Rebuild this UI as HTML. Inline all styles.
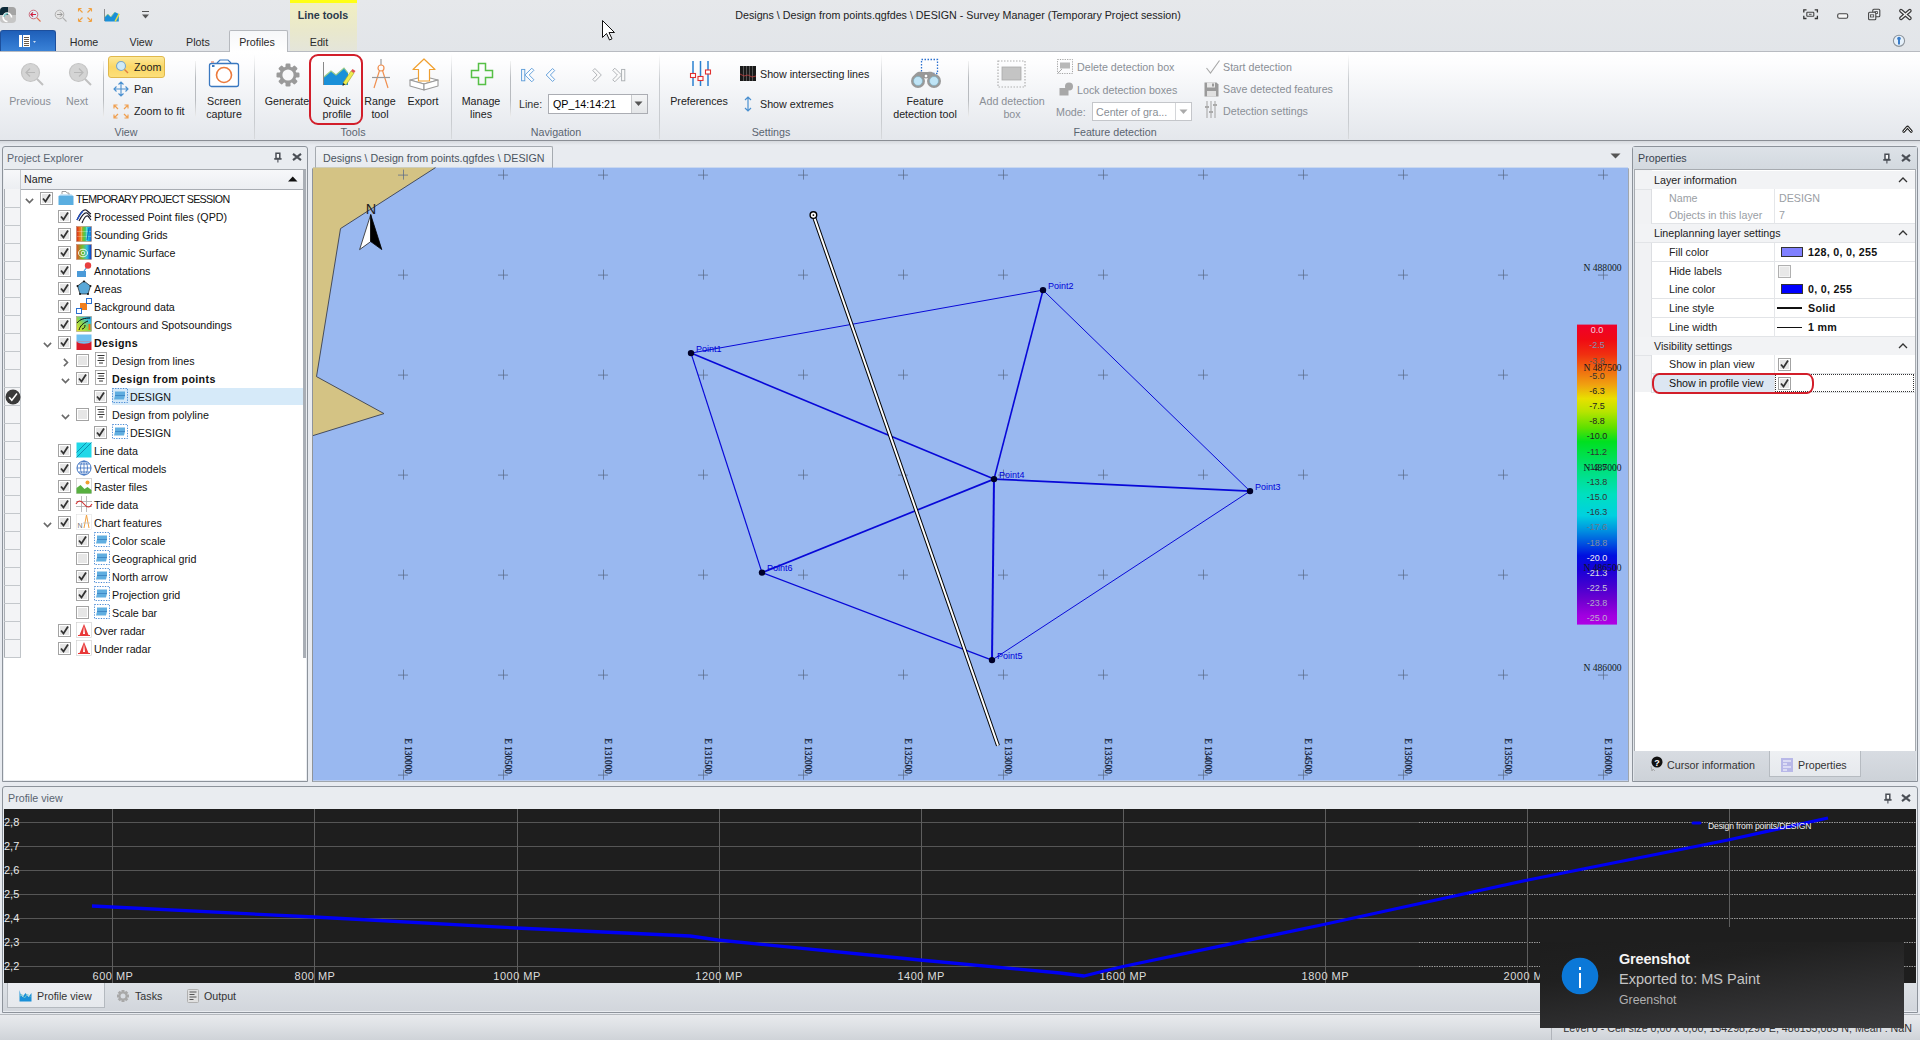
<!DOCTYPE html>
<html><head><meta charset="utf-8">
<style>
*{box-sizing:border-box;margin:0;padding:0}
html,body{width:1920px;height:1040px;overflow:hidden;background:#e8ebf0;font-family:"Liberation Sans",sans-serif;font-size:10.7px;color:#1e1e1e}
.a{position:absolute;white-space:nowrap}
.t{position:absolute;white-space:nowrap;line-height:12px}
.c{transform:translateX(-50%)}
svg{position:absolute;overflow:visible}
</style></head><body>
<!-- TITLE BAR -->
<div class="a" style="left:0;top:0;width:1920px;height:52px;background:linear-gradient(#e6e8eb,#e2e5e9)"></div>
<div id="ribbonbg" class="a" style="left:0;top:51px;width:1920px;height:90px;background:linear-gradient(#ffffff 0%,#fdfdfe 12%,#f0f2f5 55%,#e4e7ec 100%);border-top:1px solid #b8bbc1;border-bottom:1px solid #8a8e95"></div><div class="a" style="left:0;top:141px;width:1920px;height:4px;background:linear-gradient(#d6d9de,#e8ebf0)"></div>
<!-- line tools context -->
<div class="a" style="left:290px;top:0;width:67px;height:51px;background:linear-gradient(#f2f0c0,#e9e8cc 60%,#e4e5da)"></div>
<div class="a" style="left:290px;top:0;width:67px;height:3px;background:#ffff14"></div>
<div class="t c" style="left:323px;top:9px;font-weight:bold;color:#2a3a4a">Line tools</div>
<div class="t c" style="left:958px;top:9px;color:#222">Designs \ Design from points.qgfdes \ DESIGN - Survey Manager (Temporary Project session)</div>
<!-- tabs -->
<div class="a" style="left:0;top:30px;width:56px;height:21px;background:linear-gradient(#1f5fb8,#2e74cc 60%,#3a82d6);border-radius:3px 3px 0 0;border:1px solid #1d4f9c;border-bottom:none"></div>
<svg style="left:18px;top:34px" width="20" height="14"><rect x="1" y="1" width="3" height="12" fill="#fff"/><rect x="5" y="1" width="7" height="12" fill="#fff"/><g stroke="#6a5a4a" stroke-width="1"><line x1="6" y1="3.5" x2="11" y2="3.5"/><line x1="6" y1="5.5" x2="11" y2="5.5"/><line x1="6" y1="7.5" x2="11" y2="7.5"/><line x1="6" y1="9.5" x2="11" y2="9.5"/><line x1="6" y1="11.5" x2="11" y2="11.5"/></g><path d="M15 7l3 0l-1.5 2z" fill="#cde"/></svg>
<div class="a" style="left:229px;top:30px;width:59px;height:22px;background:linear-gradient(#f6f7f9,#ffffff);border:1px solid #b6b9be;border-bottom:none;border-radius:2px 2px 0 0"></div>
<div class="t c" style="left:84px;top:36px;color:#2b2b2b">Home</div>
<div class="t c" style="left:141px;top:36px;color:#2b2b2b">View</div>
<div class="t c" style="left:198px;top:36px;color:#2b2b2b">Plots</div>
<div class="t c" style="left:257px;top:36px;color:#2b2b2b">Profiles</div>
<div class="t c" style="left:319px;top:36px;color:#2b2b2b">Edit</div>
<!-- RIBBON CONTENT -->
<svg id="cursor" style="left:602px;top:20px;z-index:50" width="13" height="21"><path d="M0.5 0.5v17l4-4 3 6.5 2.5-1.2-3-6.3h5.5z" fill="#fff" stroke="#111" stroke-width="1" stroke-linejoin="round"/></svg>
<!-- quick access -->
<svg style="left:0;top:7px" width="16" height="16"><defs><clipPath id="lg"><rect x="0" y="0" width="16" height="16" rx="4"/></clipPath></defs><g clip-path="url(#lg)"><rect x="0" y="0" width="16" height="16" fill="#c6c6c6"/><rect x="0" y="0" width="8" height="8" fill="#0d2a38"/><rect x="8" y="0" width="8" height="8" fill="#a4a4a4"/></g><path d="M11.5 10.5A4.2 4.2 0 1 0 7.5 14.5" fill="none" stroke="#fff" stroke-width="1.6"/><path d="M4 10A4.2 4.2 0 0 1 8 6.5" fill="none" stroke="#7cc8c8" stroke-width="1.4"/></svg>
<svg style="left:28px;top:9px" width="14" height="13"><circle cx="5.5" cy="5.5" r="4.3" fill="#dff0f8" stroke="#c86070" stroke-width="0.9"/><path d="M8 5.5H3M5 3.3L2.8 5.5 5 7.7" fill="none" stroke="#d02040" stroke-width="1.1"/><line x1="8.7" y1="8.7" x2="12.5" y2="12.5" stroke="#e07050" stroke-width="1.1"/></svg>
<svg style="left:54px;top:9px" width="14" height="13"><circle cx="5.5" cy="5.5" r="4.3" fill="#e4e4e4" stroke="#aaa" stroke-width="0.9"/><path d="M3 5.5h5M6 3.3l2.2 2.2L6 7.7" fill="none" stroke="#999" stroke-width="1"/><line x1="8.7" y1="8.7" x2="12.5" y2="12.5" stroke="#b0b0b0" stroke-width="1.1"/></svg>
<svg style="left:77px;top:7px" width="16" height="16" fill="none" stroke="#f0a040" stroke-width="1.1"><path d="M1.5 1.5l4 4M1.5 1.5h3M1.5 1.5v3M14.5 1.5l-4 4M14.5 1.5h-3M14.5 1.5v3M1.5 14.5l4-4M1.5 14.5h3M1.5 14.5v-3M14.5 14.5l-4-4M14.5 14.5h-3M14.5 14.5v-3"/></svg>
<svg style="left:104px;top:9px" width="16" height="13"><line x1="0.5" y1="0" x2="0.5" y2="12" stroke="#777" stroke-width="0.8"/><path d="M0.8 8l3-3 3 3 4-5 4 2v7.5H0.8z" fill="#1a90d8"/><path d="M0.8 8l3-3 3 3 4-5" fill="none" stroke="#9c8" stroke-width="0.8"/><path d="M10.5 12l4-7.5 1.3 0.8-4 7.5z" fill="#e8e040"/></svg>
<svg style="left:141px;top:10px" width="9" height="10"><line x1="1" y1="1.5" x2="8" y2="1.5" stroke="#555"/><path d="M1 4.5h7l-3.5 4z" fill="#555"/></svg>
<!-- window controls -->
<svg style="left:1803px;top:9px" width="16" height="12"><path d="M0.8 3.5V0.8h2.7M11.7 0.8h2.7v2.7M14.4 6.8v2.7h-2.7M3.5 9.5H0.8V6.8" fill="none" stroke="#333" stroke-width="1.3"/><rect x="3.8" y="3.3" width="7" height="4" rx="0.6" fill="none" stroke="#444" stroke-width="1.1"/><line x1="6" y1="5.3" x2="8.6" y2="5.3" stroke="#444" stroke-width="0.9"/></svg>
<svg style="left:1837px;top:13px" width="12" height="7"><rect x="0.7" y="0.7" width="10" height="4.5" rx="1.5" fill="#f6f6f6" stroke="#444" stroke-width="1.1"/></svg>
<svg style="left:1868px;top:8px" width="13" height="13"><rect x="4.8" y="1.3" width="7" height="7.5" rx="1" fill="#eceef1" stroke="#444" stroke-width="1.1"/><rect x="6.8" y="3.6" width="2.6" height="2" fill="none" stroke="#444" stroke-width="0.8"/><rect x="0.6" y="4.2" width="7.2" height="7.6" rx="1" fill="#eceef1" stroke="#444" stroke-width="1.1"/><rect x="2.5" y="6.8" width="3.2" height="2.2" fill="none" stroke="#444" stroke-width="0.8"/></svg>
<svg style="left:1899px;top:9px" width="13" height="11"><path d="M2 1.8l8.8 7.4M10.8 1.8l-8.8 7.4" stroke="#3a3a3a" stroke-width="3.8" stroke-linecap="round"/><path d="M2 1.8l8.8 7.4M10.8 1.8l-8.8 7.4" stroke="#f4f4f4" stroke-width="1.4" stroke-linecap="round"/></svg>
<svg style="left:1892px;top:34px" width="14" height="14"><circle cx="7" cy="6.8" r="5.6" fill="#e6f1fb" stroke="#8e959c" stroke-width="1.1"/><circle cx="7" cy="4.6" r="1.8" fill="#3a7cc8"/><rect x="6" y="5" width="2" height="5.5" rx="0.5" fill="#3a7cc8"/></svg>
<svg style="left:1902px;top:124px" width="11" height="10"><path d="M1.8 7.3L5.5 3l3.7 4.3" fill="none" stroke="#2a2a2a" stroke-width="3" stroke-linecap="round" stroke-linejoin="round"/><path d="M1.8 7.3L5.5 3l3.7 4.3" fill="none" stroke="#fff" stroke-width="1" stroke-linecap="round" stroke-linejoin="round"/></svg>
<!-- group separators -->
<div class="a" style="left:254px;top:54px;width:1px;height:85px;background:linear-gradient(#fff,#c9ccd0 30%,#c9ccd0 80%,#d8dadd)"></div>
<div class="a" style="left:451px;top:54px;width:1px;height:85px;background:linear-gradient(#fff,#c9ccd0 30%,#c9ccd0 80%,#d8dadd)"></div>
<div class="a" style="left:659px;top:54px;width:1px;height:85px;background:linear-gradient(#fff,#c9ccd0 30%,#c9ccd0 80%,#d8dadd)"></div>
<div class="a" style="left:881px;top:54px;width:1px;height:85px;background:linear-gradient(#fff,#c9ccd0 30%,#c9ccd0 80%,#d8dadd)"></div>
<div class="a" style="left:1348px;top:54px;width:1px;height:85px;background:linear-gradient(#fff,#c9ccd0 30%,#c9ccd0 80%,#d8dadd)"></div>
<!-- inner separators -->
<div class="a" style="left:103px;top:61px;width:1px;height:56px;background:linear-gradient(#f4f4f4,#b8bbbf 30%,#b8bbbf 70%,#eee)"></div>
<div class="a" style="left:195px;top:61px;width:1px;height:56px;background:linear-gradient(#f4f4f4,#b8bbbf 30%,#b8bbbf 70%,#eee)"></div>
<div class="a" style="left:510px;top:61px;width:1px;height:56px;background:linear-gradient(#f4f4f4,#b8bbbf 30%,#b8bbbf 70%,#eee)"></div>
<div class="a" style="left:968px;top:61px;width:1px;height:56px;background:linear-gradient(#f4f4f4,#b8bbbf 30%,#b8bbbf 70%,#eee)"></div>
<!-- group labels -->
<div class="t c" style="left:126px;top:126px;color:#5a6470">View</div>
<div class="t c" style="left:353px;top:126px;color:#5a6470">Tools</div>
<div class="t c" style="left:556px;top:126px;color:#5a6470">Navigation</div>
<div class="t c" style="left:771px;top:126px;color:#5a6470">Settings</div>
<div class="t c" style="left:1115px;top:126px;color:#5a6470">Feature detection</div>

<!-- VIEW group -->
<svg style="left:20px;top:62px" width="24" height="24"><circle cx="10.5" cy="10.5" r="9" fill="#d4d4d4" stroke="#c4c4c4" stroke-width="1.2"/><path d="M15 10.5H6M10 6.5l-4 4 4 4" fill="none" stroke="#b8b8b8" stroke-width="1.2"/><line x1="17" y1="17" x2="23" y2="23" stroke="#c0c0c0" stroke-width="2"/></svg>
<div class="t c" style="left:30px;top:95px;color:#8a8f96">Previous</div>
<svg style="left:68px;top:62px" width="24" height="24"><circle cx="10.5" cy="10.5" r="9" fill="#d4d4d4" stroke="#c4c4c4" stroke-width="1.2"/><path d="M6 10.5h9M11 6.5l4 4-4 4" fill="none" stroke="#b8b8b8" stroke-width="1.2"/><line x1="17" y1="17" x2="23" y2="23" stroke="#c0c0c0" stroke-width="2"/></svg>
<div class="t c" style="left:77px;top:95px;color:#8a8f96">Next</div>
<div class="a" style="left:108px;top:56px;width:57px;height:22px;border:1px solid #e0b84c;border-radius:3px;background:linear-gradient(#fde99a,#fbd766 50%,#fcdf7a)"></div>
<svg style="left:115px;top:60px" width="14" height="14"><circle cx="6" cy="6" r="4.5" fill="#cfeaf8" stroke="#7aa8c8" stroke-width="1.1"/><line x1="9.5" y1="9.5" x2="13" y2="13" stroke="#e08040" stroke-width="1.4"/></svg>
<div class="t" style="left:134px;top:61px;color:#222">Zoom</div>
<svg style="left:113px;top:81px" width="16" height="16" fill="none" stroke="#4a90d0" stroke-width="1.1"><path d="M8 1v14M1 8h14M5.5 3.5L8 1l2.5 2.5M5.5 12.5L8 15l2.5-2.5M3.5 5.5L1 8l2.5 2.5M12.5 5.5L15 8l-2.5 2.5"/></svg>
<div class="t" style="left:134px;top:83px;color:#222">Pan</div>
<svg style="left:113px;top:104px" width="16" height="15" fill="none" stroke="#f0a050" stroke-width="1.2"><path d="M1 4.5V1h3.5M1 1l4 4M15 4.5V1h-3.5M15 1l-4 4M1 10.5V14h3.5M1 14l4-4M15 10.5V14h-3.5M15 14l-4-4"/></svg>
<div class="t" style="left:134px;top:105px;color:#222">Zoom to fit</div>
<svg style="left:208px;top:59px" width="32" height="29"><path d="M9 4l3-3h8l3 3" fill="none" stroke="#3a78c0" stroke-width="1.2"/><rect x="1.5" y="4.5" width="29" height="23" rx="2" fill="#fff" stroke="#3a78c0" stroke-width="1.3"/><circle cx="16" cy="16" r="7.5" fill="none" stroke="#ec7a3c" stroke-width="1.6"/><rect x="4" y="6" width="2.5" height="2" fill="#3a78c0"/><path d="M3 3h3" stroke="#e07050" stroke-width="1"/></svg>
<div class="t c" style="left:224px;top:95px;color:#222">Screen</div>
<div class="t c" style="left:224px;top:108px;color:#222">capture</div>

<!-- TOOLS group -->
<svg style="left:276px;top:63px" width="24" height="24"><g fill="#9a9a9a"><rect x="9.5" y="0.5" width="5" height="23" rx="1.2"/><rect x="9.5" y="0.5" width="5" height="23" rx="1.2" transform="rotate(45 12 12)"/><rect x="9.5" y="0.5" width="5" height="23" rx="1.2" transform="rotate(90 12 12)"/><rect x="9.5" y="0.5" width="5" height="23" rx="1.2" transform="rotate(135 12 12)"/><circle cx="12" cy="12" r="8.5"/></g><circle cx="12" cy="12" r="5.6" fill="#f8f8f9"/></svg>
<div class="t c" style="left:287px;top:95px;color:#222">Generate</div>
<svg style="left:323px;top:62px" width="32" height="24"><line x1="0.5" y1="0" x2="0.5" y2="23" stroke="#888" stroke-width="1"/><path d="M1 15l7-6 5 4 8-7 4 5v12H1z" fill="#1a90d8"/><path d="M1 15l7-6 5 4 8-7 4 5" fill="none" stroke="#98cc88" stroke-width="1.1"/><path d="M20 21l8-12 3 2-8 12z" fill="#f0ec50" stroke="#a0a020" stroke-width="0.6"/><path d="M28 9l1.5-2 3 2-1.5 2z" fill="#e05050"/><path d="M20 21l-0.5 3 2.5-1.5z" fill="#222"/></svg>
<div class="a" style="left:309px;top:54px;width:54px;height:71px;border:2.5px solid #d21e2a;border-radius:9px"></div>
<div class="t c" style="left:337px;top:95px;color:#222">Quick</div>
<div class="t c" style="left:337px;top:108px;color:#222">profile</div>
<svg style="left:372px;top:59px" width="18" height="30" fill="none" stroke="#f09050" stroke-width="1.2"><line x1="9" y1="0" x2="9" y2="6" stroke="#999"/><circle cx="9" cy="9" r="3"/><path d="M7.5 11.5L2 29M10.5 11.5L16 29"/><line x1="0" y1="18.5" x2="18" y2="18.5" stroke="#999"/></svg>
<div class="t c" style="left:380px;top:95px;color:#222">Range</div>
<div class="t c" style="left:380px;top:108px;color:#222">tool</div>
<svg style="left:408px;top:57px" width="32" height="34"><path d="M2 23L16 19.5 30 23 16 27Z" fill="#fff" stroke="#9a9a9a" stroke-width="1.1" stroke-linejoin="round"/><path d="M2 23L16 27V33L2 29Z" fill="#fff" stroke="#9a9a9a" stroke-width="1.1" stroke-linejoin="round"/><path d="M16 27L30 23V29L16 33Z" fill="#fff" stroke="#9a9a9a" stroke-width="1.1" stroke-linejoin="round"/><path d="M16 2L27 12.5H21.5V24H10.5V12.5H5Z" fill="#fff" stroke="#f0a030" stroke-width="1.2" stroke-linejoin="round"/></svg>
<div class="t c" style="left:423px;top:95px;color:#222">Export</div>

<!-- NAVIGATION -->
<svg style="left:470px;top:62px" width="24" height="24"><path d="M8.5 1.5h7v7h7v7h-7v7h-7v-7h-7v-7h7z" fill="none" stroke="#56c046" stroke-width="1.5"/></svg>
<div class="t c" style="left:481px;top:95px;color:#222">Manage</div>
<div class="t c" style="left:481px;top:108px;color:#222">lines</div>
<svg style="left:520px;top:67px" width="16" height="16"><rect x="1.6" y="2.4" width="3.2" height="11.4" fill="#f4f8fc" stroke="#5a9ad8" stroke-width="0.9"/><path d="M4.9 8L11.8 1.2 13.9 3.3 9.2 8 13.9 12.7 11.8 14.8Z" fill="#fafcfe" stroke="#5a9ad8" stroke-width="0.9" stroke-linejoin="round"/></svg>
<svg style="left:545px;top:67px" width="12" height="16"><path d="M1.2 8L7.6 1.5 9.7 3.6 5.4 8 9.7 12.4 7.6 14.5Z" fill="#fafcfe" stroke="#5a9ad8" stroke-width="0.9" stroke-linejoin="round"/></svg>
<svg style="left:591px;top:67px" width="12" height="16"><path d="M10.3 8L3.9 1.5 1.8 3.6 6.1 8 1.8 12.4 3.9 14.5Z" fill="#fafafa" stroke="#a8acb0" stroke-width="0.9" stroke-linejoin="round"/></svg>
<svg style="left:611px;top:67px" width="16" height="16"><path d="M10.6 8L3.8 1.2 1.7 3.3 6.4 8 1.7 12.7 3.8 14.8Z" fill="#fafafa" stroke="#a8acb0" stroke-width="0.9" stroke-linejoin="round"/><rect x="10.6" y="2.4" width="3.2" height="11.4" fill="#fafafa" stroke="#a8acb0" stroke-width="0.9"/></svg>
<div class="t" style="left:519px;top:98px;color:#333">Line:</div>
<div class="a" style="left:548px;top:94px;width:100px;height:20px;background:#fff;border:1px solid #abadb3"></div>
<div class="a" style="left:631px;top:95px;width:16px;height:18px;background:linear-gradient(#f4f5f6,#e4e6e8);border-left:1px solid #c8cacd"></div>
<svg style="left:634px;top:101px" width="9" height="6"><path d="M0.5 0.5h8l-4 4.5z" fill="#555"/></svg>
<div class="t" style="left:553px;top:98px;color:#000">QP_14:14:21</div>

<!-- SETTINGS -->
<svg style="left:690px;top:60px" width="21" height="27"><g stroke="#2a80d0" stroke-width="1.5"><line x1="3" y1="1" x2="3" y2="26"/><line x1="10.5" y1="1" x2="10.5" y2="26"/><line x1="18" y1="1" x2="18" y2="26"/></g><g fill="#fff" stroke="#e03030" stroke-width="1.1"><rect x="0.5" y="13.5" width="5" height="4"/><rect x="8" y="16.5" width="5" height="4"/><rect x="15.5" y="10" width="5" height="4"/></g></svg>
<div class="t c" style="left:699px;top:95px;color:#222">Preferences</div>
<svg style="left:740px;top:66px" width="16" height="15"><rect x="0" y="0" width="16" height="15" fill="#1a1a1a"/><g stroke="#555" stroke-width="1"><line x1="3.5" y1="0" x2="3.5" y2="15"/><line x1="6.5" y1="0" x2="6.5" y2="15"/><line x1="9.5" y1="0" x2="9.5" y2="15"/><line x1="12.5" y1="0" x2="12.5" y2="15"/></g><path d="M0 8l4 2 4-1 4 2 4-1" fill="none" stroke="#c04040" stroke-width="0.8"/></svg>
<div class="t" style="left:760px;top:68px;color:#222">Show intersecting lines</div>
<svg style="left:743px;top:96px" width="10" height="16" fill="none" stroke="#4a90d0" stroke-width="1.2"><path d="M5 1v14M2 4l3-3 3 3M2 12l3 3 3-3"/></svg>
<div class="t" style="left:760px;top:98px;color:#222">Show extremes</div>

<!-- FEATURE DETECTION -->
<svg style="left:909px;top:58px" width="34" height="31"><rect x="12.5" y="1.5" width="16" height="14" fill="none" stroke="#2a70d0" stroke-width="1.3" stroke-dasharray="1.5 1.5"/><path d="M4 20c2-6 6-7 9-6h6c3-1 7 0 9 6" fill="#999"/><circle cx="9" cy="23" r="7" fill="#999"/><circle cx="25" cy="23" r="7" fill="#999"/><circle cx="9" cy="23" r="4.5" fill="#bfe4f6" stroke="#7ab" stroke-width="0.6"/><circle cx="25" cy="23" r="4.5" fill="#bfe4f6" stroke="#7ab" stroke-width="0.6"/><circle cx="17" cy="18" r="2" fill="#fff" stroke="#888"/></svg>
<div class="t c" style="left:925px;top:95px;color:#222">Feature</div>
<div class="t c" style="left:925px;top:108px;color:#222">detection tool</div>
<svg style="left:997px;top:60px" width="29" height="28"><rect x="1" y="1" width="27" height="26" fill="none" stroke="#b0b0b0" stroke-width="1.2" stroke-dasharray="1.5 1.5"/><rect x="5" y="7" width="19" height="13" fill="#c4c4c4" stroke="#aaa" stroke-width="0.8"/></svg>
<div class="t c" style="left:1012px;top:95px;color:#8a8f96">Add detection</div>
<div class="t c" style="left:1012px;top:108px;color:#8a8f96">box</div>
<svg style="left:1057px;top:59px" width="16" height="15"><rect x="0.5" y="0.5" width="15" height="14" fill="none" stroke="#999" stroke-width="0.9" stroke-dasharray="1.2 1.2"/><rect x="3" y="3.5" width="10" height="6" fill="#b8b8b8"/><path d="M1 14l4-4" stroke="#aaa"/></svg>
<div class="t" style="left:1077px;top:61px;color:#8a8f96">Delete detection box</div>
<svg style="left:1059px;top:82px" width="15" height="14"><rect x="0.5" y="6" width="9" height="7.5" fill="#a8a8a8"/><circle cx="10" cy="4.5" r="4" fill="#a8a8a8"/></svg>
<div class="t" style="left:1077px;top:84px;color:#8a8f96">Lock detection boxes</div>
<div class="t" style="left:1056px;top:106px;color:#8a8f96">Mode:</div>
<div class="a" style="left:1092px;top:102px;width:100px;height:19px;background:#fff;border:1px solid #c4c6ca"></div>
<div class="a" style="left:1175px;top:103px;width:16px;height:17px;border-left:1px solid #d4d6d9"></div>
<svg style="left:1179px;top:109px" width="9" height="6"><path d="M0.5 0.5h8l-4 4.5z" fill="#aaa"/></svg>
<div class="t" style="left:1096px;top:106px;color:#8a8f96">Center of gra...</div>
<svg style="left:1205px;top:59px" width="16" height="16"><path d="M1.5 9l4 5L14.5 1.5" fill="none" stroke="#a8a8a8" stroke-width="1.1"/></svg>
<div class="t" style="left:1223px;top:61px;color:#8a8f96">Start detection</div>
<svg style="left:1204px;top:82px" width="15" height="15"><path d="M0.5 0.5h12l2 2v12h-14z" fill="#9a9a9a"/><rect x="3" y="0.5" width="8" height="5" fill="#e8e8e8"/><rect x="3" y="9" width="9" height="5.5" fill="#e0e0e0"/><rect x="8" y="1.5" width="2" height="3" fill="#9a9a9a"/></svg>
<div class="t" style="left:1223px;top:83px;color:#8a8f96">Save detected features</div>
<svg style="left:1205px;top:101px" width="12" height="17" fill="none" stroke="#aaa" stroke-width="1.1"><path d="M2 0v17M6 0v17M10 0v17"/><path d="M0 6h4M4 11h4M8 4h4" stroke-width="2"/></svg>
<div class="t" style="left:1223px;top:105px;color:#8a8f96">Detection settings</div>

<!-- PANELS -->
<div class="a" style="left:2px;top:146px;width:306px;height:636px;border:1px solid #8d939b;border-radius:3px 3px 0 0;background:#e9ecf0"></div>
<div class="t" style="left:7px;top:152px;color:#5a6470">Project Explorer</div>
<svg style="left:273.6px;top:152px" width="8" height="11"><path d="M2 1.3h3.8v5.3H2z" fill="#fafbfc" stroke="#4a4e55" stroke-width="1.5"/><path d="M0.2 6.9h7.4" stroke="#4a4e55" stroke-width="1.6"/><path d="M3.9 7v3.6" stroke="#4a4e55" stroke-width="1.1"/></svg>
<svg style="left:291.5px;top:153.4px" width="10" height="8"><path d="M1 0.9l8 6.2M9 0.9l-8 6.2" stroke="#4a4e55" stroke-width="2.1"/></svg>
<div class="a" style="left:4px;top:169px;width:302px;height:611px;background:#fff;border-top:1px solid #a7abb0"></div>
<div class="a" style="left:4px;top:170px;width:299px;height:20px;background:linear-gradient(#f7f8fa,#eceef2);border-bottom:1px solid #a9adb3"></div>
<div class="a" style="left:303px;top:170px;width:3px;height:488px;background:#a9aeb5"></div>
<div class="a" style="left:20px;top:170px;width:1px;height:19px;background:#c4c8cc"></div>
<div class="t" style="left:24px;top:173px;color:#222">Name</div>
<svg style="left:288px;top:176px" width="10" height="6"><path d="M0 5.5h9.5L4.75 0.5z" fill="#111"/></svg>
<div class="a" style="left:4px;top:189px;width:17px;height:469px;background:#f3f4f6;border-right:1px solid #c0c4c8;border-left:1px solid #a9adb3"></div>
<div class="a" style="left:4px;top:207px;width:17px;height:1px;background:#c4c8cc"></div>
<div class="a" style="left:4px;top:225px;width:17px;height:1px;background:#c4c8cc"></div>
<div class="a" style="left:4px;top:243px;width:17px;height:1px;background:#c4c8cc"></div>
<div class="a" style="left:4px;top:261px;width:17px;height:1px;background:#c4c8cc"></div>
<div class="a" style="left:4px;top:279px;width:17px;height:1px;background:#c4c8cc"></div>
<div class="a" style="left:4px;top:297px;width:17px;height:1px;background:#c4c8cc"></div>
<div class="a" style="left:4px;top:315px;width:17px;height:1px;background:#c4c8cc"></div>
<div class="a" style="left:4px;top:333px;width:17px;height:1px;background:#c4c8cc"></div>
<div class="a" style="left:4px;top:351px;width:17px;height:1px;background:#c4c8cc"></div>
<div class="a" style="left:4px;top:369px;width:17px;height:1px;background:#c4c8cc"></div>
<div class="a" style="left:4px;top:387px;width:17px;height:1px;background:#c4c8cc"></div>
<div class="a" style="left:4px;top:405px;width:17px;height:1px;background:#c4c8cc"></div>
<div class="a" style="left:4px;top:423px;width:17px;height:1px;background:#c4c8cc"></div>
<div class="a" style="left:4px;top:441px;width:17px;height:1px;background:#c4c8cc"></div>
<div class="a" style="left:4px;top:459px;width:17px;height:1px;background:#c4c8cc"></div>
<div class="a" style="left:4px;top:477px;width:17px;height:1px;background:#c4c8cc"></div>
<div class="a" style="left:4px;top:495px;width:17px;height:1px;background:#c4c8cc"></div>
<div class="a" style="left:4px;top:513px;width:17px;height:1px;background:#c4c8cc"></div>
<div class="a" style="left:4px;top:531px;width:17px;height:1px;background:#c4c8cc"></div>
<div class="a" style="left:4px;top:549px;width:17px;height:1px;background:#c4c8cc"></div>
<div class="a" style="left:4px;top:567px;width:17px;height:1px;background:#c4c8cc"></div>
<div class="a" style="left:4px;top:585px;width:17px;height:1px;background:#c4c8cc"></div>
<div class="a" style="left:4px;top:603px;width:17px;height:1px;background:#c4c8cc"></div>
<div class="a" style="left:4px;top:621px;width:17px;height:1px;background:#c4c8cc"></div>
<div class="a" style="left:4px;top:639px;width:17px;height:1px;background:#c4c8cc"></div>
<div class="a" style="left:4px;top:657px;width:17px;height:1px;background:#c4c8cc"></div>
<div class="a" style="left:112px;top:388px;width:191px;height:17px;background:#d6eaf9"></div>
<svg style="left:5px;top:389px" width="16" height="16"><circle cx="8" cy="8" r="7.5" fill="#3a3a3a"/><path d="M4.2 8.2l2.6 3L12 4.5" fill="none" stroke="#fff" stroke-width="1.5"/></svg>
<svg style="left:25px;top:198px" width="9" height="6"><path d="M0.9 0.9l3.6 3.6 3.6-3.6" fill="none" stroke="#6a6a6a" stroke-width="1.6"/></svg>
<svg style="left:40px;top:192px" width="13" height="13"><rect x="0.5" y="0.5" width="12" height="12" fill="#fff" stroke="#a3a3a3"/><rect x="2" y="2" width="9" height="9" fill="#e6e6e6"/><path d="M3 6.5l2.5 3L10 2.5" fill="none" stroke="#333" stroke-width="1.8"/></svg>
<svg style="left:58px;top:190px" width="16" height="16"><path d="M4 4V1.5h4l1 1.5h2v2" fill="#fff" stroke="#888" stroke-width="0.8"/><rect x="0.5" y="6" width="15" height="9" fill="#5aaee0"/><path d="M0.5 6l2-1.5h11l2 1.5" fill="#9fd0f0"/></svg>
<div class="t" style="left:76px;top:193px;color:#111;letter-spacing:-0.68px">TEMPORARY PROJECT SESSION</div>
<svg style="left:58px;top:210px" width="13" height="13"><rect x="0.5" y="0.5" width="12" height="12" fill="#fff" stroke="#a3a3a3"/><rect x="2" y="2" width="9" height="9" fill="#e6e6e6"/><path d="M3 6.5l2.5 3L10 2.5" fill="none" stroke="#333" stroke-width="1.8"/></svg>
<svg style="left:76px;top:208px" width="16" height="16"><path d="M1 12C4 5 7 1 10 2c2 1 3 3 5 4M3 13C6 7 9 4 11 5c2 1 3 3 4 4M6 15C8 10 10 7 12 8c1 1 2 3 3 4" fill="none" stroke="#1a1a2a" stroke-width="1.2"/><path d="M1 12C3 8 5 5 7 3" fill="none" stroke="#2050c8" stroke-width="1.4"/></svg>
<div class="t" style="left:94px;top:211px;color:#111;">Processed Point files (QPD)</div>
<svg style="left:58px;top:228px" width="13" height="13"><rect x="0.5" y="0.5" width="12" height="12" fill="#fff" stroke="#a3a3a3"/><rect x="2" y="2" width="9" height="9" fill="#e6e6e6"/><path d="M3 6.5l2.5 3L10 2.5" fill="none" stroke="#333" stroke-width="1.8"/></svg>
<svg style="left:76px;top:226px" width="16" height="16"><defs><linearGradient id="gsg" x1="0" x2="1"><stop offset="0" stop-color="#d82818"/><stop offset="0.3" stop-color="#f09020"/><stop offset="0.5" stop-color="#58c838"/><stop offset="0.75" stop-color="#20c8e8"/><stop offset="1" stop-color="#1060d0"/></linearGradient></defs><rect x="0.5" y="0.5" width="15" height="15" fill="url(#gsg)" stroke="#b08060" stroke-width="0.5"/><path d="M5.5 1v14M10.5 1v14M1 5.5h14M1 10.5h14" stroke="#fff" stroke-opacity="0.35" stroke-width="0.8"/><path d="M13 2l-2 12" stroke="#1050b0" stroke-width="0.8"/></svg>
<div class="t" style="left:94px;top:229px;color:#111;">Sounding Grids</div>
<svg style="left:58px;top:246px" width="13" height="13"><rect x="0.5" y="0.5" width="12" height="12" fill="#fff" stroke="#a3a3a3"/><rect x="2" y="2" width="9" height="9" fill="#e6e6e6"/><path d="M3 6.5l2.5 3L10 2.5" fill="none" stroke="#333" stroke-width="1.8"/></svg>
<svg style="left:76px;top:244px" width="16" height="16"><defs><linearGradient id="gds" x1="0" x2="1"><stop offset="0" stop-color="#e05020"/><stop offset="0.4" stop-color="#70c030"/><stop offset="0.7" stop-color="#30c0e0"/><stop offset="1" stop-color="#0830c0"/></linearGradient></defs><rect x="0.5" y="0.5" width="15" height="15" fill="url(#gds)" stroke="#b08060" stroke-width="0.5"/><ellipse cx="7" cy="9" rx="4.5" ry="3.8" fill="none" stroke="#fff" stroke-width="0.9"/><circle cx="7" cy="9" r="1.8" fill="none" stroke="#fff" stroke-width="0.8"/></svg>
<div class="t" style="left:94px;top:247px;color:#111;">Dynamic Surface</div>
<svg style="left:58px;top:264px" width="13" height="13"><rect x="0.5" y="0.5" width="12" height="12" fill="#fff" stroke="#a3a3a3"/><rect x="2" y="2" width="9" height="9" fill="#e6e6e6"/><path d="M3 6.5l2.5 3L10 2.5" fill="none" stroke="#333" stroke-width="1.8"/></svg>
<svg style="left:76px;top:262px" width="16" height="16"><rect x="1" y="9" width="9" height="6" fill="#4a9ad8"/><line x1="8" y1="9" x2="11" y2="5" stroke="#4a9ad8" stroke-width="1.2"/><circle cx="12" cy="3.5" r="3.2" fill="#e84040"/></svg>
<div class="t" style="left:94px;top:265px;color:#111;">Annotations</div>
<svg style="left:58px;top:282px" width="13" height="13"><rect x="0.5" y="0.5" width="12" height="12" fill="#fff" stroke="#a3a3a3"/><rect x="2" y="2" width="9" height="9" fill="#e6e6e6"/><path d="M3 6.5l2.5 3L10 2.5" fill="none" stroke="#333" stroke-width="1.8"/></svg>
<svg style="left:76px;top:280px" width="16" height="16"><path d="M8 1l6.5 5-2.5 8H4L1.5 6z" fill="#5aa8d8" stroke="#222" stroke-width="0.7"/><circle cx="8" cy="1.5" r="1" fill="#111"/><circle cx="14.5" cy="6" r="1" fill="#111"/><circle cx="12" cy="14" r="1" fill="#111"/><circle cx="4" cy="14" r="1" fill="#111"/><circle cx="1.5" cy="6" r="1" fill="#111"/></svg>
<div class="t" style="left:94px;top:283px;color:#111;">Areas</div>
<svg style="left:58px;top:300px" width="13" height="13"><rect x="0.5" y="0.5" width="12" height="12" fill="#fff" stroke="#a3a3a3"/><rect x="2" y="2" width="9" height="9" fill="#e6e6e6"/><path d="M3 6.5l2.5 3L10 2.5" fill="none" stroke="#333" stroke-width="1.8"/></svg>
<svg style="left:76px;top:298px" width="16" height="16"><rect x="4" y="5" width="7" height="7" fill="#f08020"/><rect x="10.5" y="0.5" width="5" height="5" fill="#fff" stroke="#2a70d0" stroke-width="1"/><rect x="0.5" y="10.5" width="5" height="5" fill="#fff" stroke="#2a70d0" stroke-width="1"/></svg>
<div class="t" style="left:94px;top:301px;color:#111;">Background data</div>
<svg style="left:58px;top:318px" width="13" height="13"><rect x="0.5" y="0.5" width="12" height="12" fill="#fff" stroke="#a3a3a3"/><rect x="2" y="2" width="9" height="9" fill="#e6e6e6"/><path d="M3 6.5l2.5 3L10 2.5" fill="none" stroke="#333" stroke-width="1.8"/></svg>
<svg style="left:76px;top:316px" width="16" height="16"><defs><linearGradient id="gct" x1="0" y1="1" x2="1" y2="0"><stop offset="0" stop-color="#e8e030"/><stop offset="0.45" stop-color="#90d848"/><stop offset="0.8" stop-color="#30b8e8"/><stop offset="1" stop-color="#2090d8"/></linearGradient></defs><rect x="0.5" y="0.5" width="15" height="15" fill="url(#gct)" stroke="#a09070" stroke-width="0.5"/><path d="M1 7C4 3 9 2 14 2M3 14c1-4 4-7 9-9M6 13c2 0 3-2 3-4" fill="none" stroke="#111" stroke-width="1"/><rect x="12.5" y="8" width="2" height="6" fill="#f07010"/></svg>
<div class="t" style="left:94px;top:319px;color:#111;">Contours and Spotsoundings</div>
<svg style="left:43px;top:342px" width="9" height="6"><path d="M0.9 0.9l3.6 3.6 3.6-3.6" fill="none" stroke="#6a6a6a" stroke-width="1.6"/></svg>
<svg style="left:58px;top:336px" width="13" height="13"><rect x="0.5" y="0.5" width="12" height="12" fill="#fff" stroke="#a3a3a3"/><rect x="2" y="2" width="9" height="9" fill="#e6e6e6"/><path d="M3 6.5l2.5 3L10 2.5" fill="none" stroke="#333" stroke-width="1.8"/></svg>
<svg style="left:76px;top:334px" width="16" height="16"><rect x="0.5" y="0.5" width="15" height="7" fill="#70c0f0"/><path d="M0.5 7.5h15V16H0.5z" fill="#d81a2a"/><path d="M0.5 7.5c3 3 12 3 15 0z" fill="#70c0f0"/></svg>
<div class="t" style="left:94px;top:337px;color:#111;font-weight:bold;letter-spacing:0.35px">Designs</div>
<svg style="left:63px;top:358px" width="6" height="9"><path d="M0.9 0.9l3.6 3.6-3.6 3.6" fill="none" stroke="#6a6a6a" stroke-width="1.6"/></svg>
<svg style="left:76px;top:354px" width="13" height="13"><rect x="0.5" y="0.5" width="12" height="12" fill="#fff" stroke="#a3a3a3"/><rect x="2" y="2" width="9" height="9" fill="#e6e6e6"/></svg>
<svg style="left:94px;top:352px" width="16" height="16"><rect x="1.5" y="0.5" width="11" height="14" fill="#fff" stroke="#999" stroke-width="0.8"/><path d="M3.5 3.5h7M4.5 6h5.5M3.5 8.5h7M5 11h4" stroke="#333" stroke-width="1"/></svg>
<div class="t" style="left:112px;top:355px;color:#111;">Design from lines</div>
<svg style="left:61px;top:378px" width="9" height="6"><path d="M0.9 0.9l3.6 3.6 3.6-3.6" fill="none" stroke="#6a6a6a" stroke-width="1.6"/></svg>
<svg style="left:76px;top:372px" width="13" height="13"><rect x="0.5" y="0.5" width="12" height="12" fill="#fff" stroke="#a3a3a3"/><rect x="2" y="2" width="9" height="9" fill="#e6e6e6"/><path d="M3 6.5l2.5 3L10 2.5" fill="none" stroke="#333" stroke-width="1.8"/></svg>
<svg style="left:94px;top:370px" width="16" height="16"><rect x="1.5" y="0.5" width="11" height="14" fill="#fff" stroke="#999" stroke-width="0.8"/><path d="M3.5 3.5h7M4.5 6h5.5M3.5 8.5h7M5 11h4" stroke="#333" stroke-width="1"/></svg>
<div class="t" style="left:112px;top:373px;color:#111;font-weight:bold;letter-spacing:0.35px">Design from points</div>
<svg style="left:94px;top:390px" width="13" height="13"><rect x="0.5" y="0.5" width="12" height="12" fill="#fff" stroke="#a3a3a3"/><rect x="2" y="2" width="9" height="9" fill="#e6e6e6"/><path d="M3 6.5l2.5 3L10 2.5" fill="none" stroke="#333" stroke-width="1.8"/></svg>
<svg style="left:112px;top:388px" width="16" height="16"><rect x="0.5" y="0.5" width="15" height="14" fill="none" stroke="#3a80d0" stroke-width="0.9" stroke-dasharray="1.3 1.3"/><path d="M3 3.5h10v4l-1 4H2l1-4z" fill="#60aee0"/><path d="M3 7.5h10" stroke="#3a80c0" stroke-width="0.8"/></svg>
<div class="t" style="left:130px;top:391px;color:#111;">DESIGN</div>
<svg style="left:61px;top:414px" width="9" height="6"><path d="M0.9 0.9l3.6 3.6 3.6-3.6" fill="none" stroke="#6a6a6a" stroke-width="1.6"/></svg>
<svg style="left:76px;top:408px" width="13" height="13"><rect x="0.5" y="0.5" width="12" height="12" fill="#fff" stroke="#a3a3a3"/><rect x="2" y="2" width="9" height="9" fill="#e6e6e6"/></svg>
<svg style="left:94px;top:406px" width="16" height="16"><rect x="1.5" y="0.5" width="11" height="14" fill="#fff" stroke="#999" stroke-width="0.8"/><path d="M3.5 3.5h7M4.5 6h5.5M3.5 8.5h7M5 11h4" stroke="#333" stroke-width="1"/></svg>
<div class="t" style="left:112px;top:409px;color:#111;">Design from polyline</div>
<svg style="left:94px;top:426px" width="13" height="13"><rect x="0.5" y="0.5" width="12" height="12" fill="#fff" stroke="#a3a3a3"/><rect x="2" y="2" width="9" height="9" fill="#e6e6e6"/><path d="M3 6.5l2.5 3L10 2.5" fill="none" stroke="#333" stroke-width="1.8"/></svg>
<svg style="left:112px;top:424px" width="16" height="16"><rect x="0.5" y="0.5" width="15" height="14" fill="none" stroke="#3a80d0" stroke-width="0.9" stroke-dasharray="1.3 1.3"/><path d="M3 3.5h10v4l-1 4H2l1-4z" fill="#60aee0"/><path d="M3 7.5h10" stroke="#3a80c0" stroke-width="0.8"/></svg>
<div class="t" style="left:130px;top:427px;color:#111;">DESIGN</div>
<svg style="left:58px;top:444px" width="13" height="13"><rect x="0.5" y="0.5" width="12" height="12" fill="#fff" stroke="#a3a3a3"/><rect x="2" y="2" width="9" height="9" fill="#e6e6e6"/><path d="M3 6.5l2.5 3L10 2.5" fill="none" stroke="#333" stroke-width="1.8"/></svg>
<svg style="left:76px;top:442px" width="16" height="16"><rect x="0.5" y="0.5" width="15" height="15" fill="#20d8e8"/><path d="M0.5 15.5L15.5 0.5M0.5 10.5L10.5 0.5" stroke="#0a7aa0" stroke-width="0.8"/></svg>
<div class="t" style="left:94px;top:445px;color:#111;">Line data</div>
<svg style="left:58px;top:462px" width="13" height="13"><rect x="0.5" y="0.5" width="12" height="12" fill="#fff" stroke="#a3a3a3"/><rect x="2" y="2" width="9" height="9" fill="#e6e6e6"/><path d="M3 6.5l2.5 3L10 2.5" fill="none" stroke="#333" stroke-width="1.8"/></svg>
<svg style="left:76px;top:460px" width="16" height="16"><circle cx="8" cy="8" r="7" fill="#fff" stroke="#3a70c0" stroke-width="1"/><path d="M1 8h14M8 1v14M3 4h10M3 12h10" stroke="#3a70c0" stroke-width="0.8"/><ellipse cx="8" cy="8" rx="3.5" ry="7" fill="none" stroke="#3a70c0" stroke-width="0.8"/></svg>
<div class="t" style="left:94px;top:463px;color:#111;">Vertical models</div>
<svg style="left:58px;top:480px" width="13" height="13"><rect x="0.5" y="0.5" width="12" height="12" fill="#fff" stroke="#a3a3a3"/><rect x="2" y="2" width="9" height="9" fill="#e6e6e6"/><path d="M3 6.5l2.5 3L10 2.5" fill="none" stroke="#333" stroke-width="1.8"/></svg>
<svg style="left:76px;top:478px" width="16" height="16"><rect x="0.5" y="0.5" width="15" height="15" fill="#fff" stroke="#bbb" stroke-width="0.6"/><path d="M0.5 15.5V10l4-3 4 4 3-2 4 3v3.5z" fill="#58b040"/><circle cx="11.5" cy="4.5" r="2" fill="#f0a030"/></svg>
<div class="t" style="left:94px;top:481px;color:#111;">Raster files</div>
<svg style="left:58px;top:498px" width="13" height="13"><rect x="0.5" y="0.5" width="12" height="12" fill="#fff" stroke="#a3a3a3"/><rect x="2" y="2" width="9" height="9" fill="#e6e6e6"/><path d="M3 6.5l2.5 3L10 2.5" fill="none" stroke="#333" stroke-width="1.8"/></svg>
<svg style="left:76px;top:496px" width="16" height="16"><path d="M0 5.5h16M0 10.5h16M5.5 0v16M10.5 0v16" stroke="#aaa" stroke-width="0.8"/><path d="M0 8c2-4 5-4 8 0s6 4 8 0" fill="none" stroke="#d03030" stroke-width="1.1"/></svg>
<div class="t" style="left:94px;top:499px;color:#111;">Tide data</div>
<svg style="left:43px;top:522px" width="9" height="6"><path d="M0.9 0.9l3.6 3.6 3.6-3.6" fill="none" stroke="#6a6a6a" stroke-width="1.6"/></svg>
<svg style="left:58px;top:516px" width="13" height="13"><rect x="0.5" y="0.5" width="12" height="12" fill="#fff" stroke="#a3a3a3"/><rect x="2" y="2" width="9" height="9" fill="#e6e6e6"/><path d="M3 6.5l2.5 3L10 2.5" fill="none" stroke="#333" stroke-width="1.8"/></svg>
<svg style="left:76px;top:514px" width="16" height="16"><rect x="0.5" y="0.5" width="15" height="15" fill="#fff" stroke="#ddd" stroke-width="0.5"/><text x="1.5" y="14" font-size="7" font-family="Liberation Sans" fill="#777">N</text><path d="M10.5 1l-2.5 13M10.5 1l2.5 13" stroke="#f0a040" stroke-width="1" fill="none"/><path d="M7 9h7" stroke="#bbb" stroke-width="0.7"/></svg>
<div class="t" style="left:94px;top:517px;color:#111;">Chart features</div>
<svg style="left:76px;top:534px" width="13" height="13"><rect x="0.5" y="0.5" width="12" height="12" fill="#fff" stroke="#a3a3a3"/><rect x="2" y="2" width="9" height="9" fill="#e6e6e6"/><path d="M3 6.5l2.5 3L10 2.5" fill="none" stroke="#333" stroke-width="1.8"/></svg>
<svg style="left:94px;top:532px" width="16" height="16"><rect x="0.5" y="0.5" width="15" height="14" fill="none" stroke="#3a80d0" stroke-width="0.9" stroke-dasharray="1.3 1.3"/><path d="M3 3.5h10v4l-1 4H2l1-4z" fill="#60aee0"/><path d="M3 7.5h10" stroke="#3a80c0" stroke-width="0.8"/></svg>
<div class="t" style="left:112px;top:535px;color:#111;">Color scale</div>
<svg style="left:76px;top:552px" width="13" height="13"><rect x="0.5" y="0.5" width="12" height="12" fill="#fff" stroke="#a3a3a3"/><rect x="2" y="2" width="9" height="9" fill="#e6e6e6"/></svg>
<svg style="left:94px;top:550px" width="16" height="16"><rect x="0.5" y="0.5" width="15" height="14" fill="none" stroke="#3a80d0" stroke-width="0.9" stroke-dasharray="1.3 1.3"/><path d="M3 3.5h10v4l-1 4H2l1-4z" fill="#60aee0"/><path d="M3 7.5h10" stroke="#3a80c0" stroke-width="0.8"/></svg>
<div class="t" style="left:112px;top:553px;color:#111;">Geographical grid</div>
<svg style="left:76px;top:570px" width="13" height="13"><rect x="0.5" y="0.5" width="12" height="12" fill="#fff" stroke="#a3a3a3"/><rect x="2" y="2" width="9" height="9" fill="#e6e6e6"/><path d="M3 6.5l2.5 3L10 2.5" fill="none" stroke="#333" stroke-width="1.8"/></svg>
<svg style="left:94px;top:568px" width="16" height="16"><rect x="0.5" y="0.5" width="15" height="14" fill="none" stroke="#3a80d0" stroke-width="0.9" stroke-dasharray="1.3 1.3"/><path d="M3 3.5h10v4l-1 4H2l1-4z" fill="#60aee0"/><path d="M3 7.5h10" stroke="#3a80c0" stroke-width="0.8"/></svg>
<div class="t" style="left:112px;top:571px;color:#111;">North arrow</div>
<svg style="left:76px;top:588px" width="13" height="13"><rect x="0.5" y="0.5" width="12" height="12" fill="#fff" stroke="#a3a3a3"/><rect x="2" y="2" width="9" height="9" fill="#e6e6e6"/><path d="M3 6.5l2.5 3L10 2.5" fill="none" stroke="#333" stroke-width="1.8"/></svg>
<svg style="left:94px;top:586px" width="16" height="16"><rect x="0.5" y="0.5" width="15" height="14" fill="none" stroke="#3a80d0" stroke-width="0.9" stroke-dasharray="1.3 1.3"/><path d="M3 3.5h10v4l-1 4H2l1-4z" fill="#60aee0"/><path d="M3 7.5h10" stroke="#3a80c0" stroke-width="0.8"/></svg>
<div class="t" style="left:112px;top:589px;color:#111;">Projection grid</div>
<svg style="left:76px;top:606px" width="13" height="13"><rect x="0.5" y="0.5" width="12" height="12" fill="#fff" stroke="#a3a3a3"/><rect x="2" y="2" width="9" height="9" fill="#e6e6e6"/></svg>
<svg style="left:94px;top:604px" width="16" height="16"><rect x="0.5" y="0.5" width="15" height="14" fill="none" stroke="#3a80d0" stroke-width="0.9" stroke-dasharray="1.3 1.3"/><path d="M3 3.5h10v4l-1 4H2l1-4z" fill="#60aee0"/><path d="M3 7.5h10" stroke="#3a80c0" stroke-width="0.8"/></svg>
<div class="t" style="left:112px;top:607px;color:#111;">Scale bar</div>
<svg style="left:58px;top:624px" width="13" height="13"><rect x="0.5" y="0.5" width="12" height="12" fill="#fff" stroke="#a3a3a3"/><rect x="2" y="2" width="9" height="9" fill="#e6e6e6"/><path d="M3 6.5l2.5 3L10 2.5" fill="none" stroke="#333" stroke-width="1.8"/></svg>
<svg style="left:76px;top:622px" width="16" height="16"><rect x="0.5" y="0.5" width="15" height="15" fill="#fff" stroke="#ccc" stroke-width="0.6"/><path d="M8 2L3.5 13h9z" fill="#e83838"/><path d="M2 13.5h12" stroke="#e83838" stroke-width="1"/><path d="M8 4l-1 8h2z" fill="#fff"/></svg>
<div class="t" style="left:94px;top:625px;color:#111;">Over radar</div>
<svg style="left:58px;top:642px" width="13" height="13"><rect x="0.5" y="0.5" width="12" height="12" fill="#fff" stroke="#a3a3a3"/><rect x="2" y="2" width="9" height="9" fill="#e6e6e6"/><path d="M3 6.5l2.5 3L10 2.5" fill="none" stroke="#333" stroke-width="1.8"/></svg>
<svg style="left:76px;top:640px" width="16" height="16"><rect x="0.5" y="0.5" width="15" height="15" fill="#fff" stroke="#ccc" stroke-width="0.6"/><path d="M8 2L3.5 13h9z" fill="#e83838"/><path d="M2 13.5h12" stroke="#e83838" stroke-width="1"/><path d="M8 4l-1 8h2z" fill="#fff"/></svg>
<div class="t" style="left:94px;top:643px;color:#111;">Under radar</div>
<div class="a" style="left:315px;top:146px;width:238px;height:23px;background:linear-gradient(#f0f2f5,#e7eaee);border:1px solid #a5aab0;border-bottom:none;border-radius:2px 2px 0 0"></div>
<div class="t" style="left:323px;top:152px;color:#4a5460">Designs \ Design from points.qgfdes \ DESIGN</div>
<svg style="left:1610px;top:153px" width="11" height="6"><path d="M0.5 0.5h10l-5 5z" fill="#555"/></svg>
<div class="a" style="left:312px;top:168px;width:1317px;height:614px;border:1px solid #a0a6ad;border-top:1px solid #d0d4d9;border-left-color:#8f949a"></div>
<svg style="left:313px;top:168.4px" width="1315" height="612.6" viewBox="313 168.4 1315 612.6">
<rect x="313" y="168" width="1315" height="613" fill="#99b8f0"/>
<path d="M313 168H435.5L340.5 229 316.5 377 384 414 313 436Z" fill="#d4c384"/>
<path d="M435.5 168L340.5 229 316.5 377 384 414 313 436" fill="none" stroke="#3a4050" stroke-width="0.9"/>
<path d="M398 175.5h10M403.5 170v10M398 275.5h10M403.5 270v10M398 375.5h10M403.5 370v10M398 475.5h10M403.5 470v10M398 575.5h10M403.5 570v10M398 675.5h10M403.5 670v10M398 775.5h10M403.5 770v10M498 175.5h10M503.5 170v10M498 275.5h10M503.5 270v10M498 375.5h10M503.5 370v10M498 475.5h10M503.5 470v10M498 575.5h10M503.5 570v10M498 675.5h10M503.5 670v10M498 775.5h10M503.5 770v10M598 175.5h10M603.5 170v10M598 275.5h10M603.5 270v10M598 375.5h10M603.5 370v10M598 475.5h10M603.5 470v10M598 575.5h10M603.5 570v10M598 675.5h10M603.5 670v10M598 775.5h10M603.5 770v10M698 175.5h10M703.5 170v10M698 275.5h10M703.5 270v10M698 375.5h10M703.5 370v10M698 475.5h10M703.5 470v10M698 575.5h10M703.5 570v10M698 675.5h10M703.5 670v10M698 775.5h10M703.5 770v10M798 175.5h10M803.5 170v10M798 275.5h10M803.5 270v10M798 375.5h10M803.5 370v10M798 475.5h10M803.5 470v10M798 575.5h10M803.5 570v10M798 675.5h10M803.5 670v10M798 775.5h10M803.5 770v10M898 175.5h10M903.5 170v10M898 275.5h10M903.5 270v10M898 375.5h10M903.5 370v10M898 475.5h10M903.5 470v10M898 575.5h10M903.5 570v10M898 675.5h10M903.5 670v10M898 775.5h10M903.5 770v10M998 175.5h10M1003.5 170v10M998 275.5h10M1003.5 270v10M998 375.5h10M1003.5 370v10M998 475.5h10M1003.5 470v10M998 575.5h10M1003.5 570v10M998 675.5h10M1003.5 670v10M998 775.5h10M1003.5 770v10M1098 175.5h10M1103.5 170v10M1098 275.5h10M1103.5 270v10M1098 375.5h10M1103.5 370v10M1098 475.5h10M1103.5 470v10M1098 575.5h10M1103.5 570v10M1098 675.5h10M1103.5 670v10M1098 775.5h10M1103.5 770v10M1198 175.5h10M1203.5 170v10M1198 275.5h10M1203.5 270v10M1198 375.5h10M1203.5 370v10M1198 475.5h10M1203.5 470v10M1198 575.5h10M1203.5 570v10M1198 675.5h10M1203.5 670v10M1198 775.5h10M1203.5 770v10M1298 175.5h10M1303.5 170v10M1298 275.5h10M1303.5 270v10M1298 375.5h10M1303.5 370v10M1298 475.5h10M1303.5 470v10M1298 575.5h10M1303.5 570v10M1298 675.5h10M1303.5 670v10M1298 775.5h10M1303.5 770v10M1398 175.5h10M1403.5 170v10M1398 275.5h10M1403.5 270v10M1398 375.5h10M1403.5 370v10M1398 475.5h10M1403.5 470v10M1398 575.5h10M1403.5 570v10M1398 675.5h10M1403.5 670v10M1398 775.5h10M1403.5 770v10M1498 175.5h10M1503.5 170v10M1498 275.5h10M1503.5 270v10M1498 375.5h10M1503.5 370v10M1498 475.5h10M1503.5 470v10M1498 575.5h10M1503.5 570v10M1498 675.5h10M1503.5 670v10M1498 775.5h10M1503.5 770v10M1598 175.5h10M1603.5 170v10M1598 275.5h10M1603.5 270v10M1598 375.5h10M1603.5 370v10M1598 475.5h10M1603.5 470v10M1598 575.5h10M1603.5 570v10M1598 675.5h10M1603.5 670v10M1598 775.5h10M1603.5 770v10" stroke="#5a6a88" stroke-opacity="0.75" stroke-width="1" fill="none"/>
<text x="371" y="214.3" font-family="Liberation Sans" font-size="14.5" text-anchor="middle" fill="#222">N</text>
<path d="M370.7 215L359.6 250 370.7 242Z" fill="#fff" stroke="#222" stroke-width="0.8"/>
<path d="M370.7 215L381.8 250 370.7 242Z" fill="#000" stroke="#000" stroke-width="0.8"/>
<line x1="691" y1="353.5" x2="1043" y2="290.5" stroke="#0808d8" stroke-width="1.0"/>
<line x1="1043" y1="290.5" x2="1250" y2="491.5" stroke="#0808d8" stroke-width="1.0"/>
<line x1="691" y1="353.5" x2="994" y2="479.5" stroke="#0808d8" stroke-width="1.6"/>
<line x1="1043" y1="290.5" x2="994" y2="479.5" stroke="#0808d8" stroke-width="1.6"/>
<line x1="994" y1="479.5" x2="1250" y2="491.5" stroke="#0808d8" stroke-width="1.8"/>
<line x1="691" y1="353.5" x2="762" y2="573" stroke="#0808d8" stroke-width="1.2"/>
<line x1="762" y1="573" x2="994" y2="479.5" stroke="#0808d8" stroke-width="1.7"/>
<line x1="994" y1="479.5" x2="992" y2="660.5" stroke="#0808d8" stroke-width="2.0"/>
<line x1="762" y1="573" x2="992" y2="660.5" stroke="#0808d8" stroke-width="1.3"/>
<line x1="992" y1="660.5" x2="1250" y2="491.5" stroke="#0808d8" stroke-width="1.0"/>
<circle cx="691" cy="353.5" r="3.2" fill="#000028"/>
<circle cx="1043" cy="290.5" r="3.2" fill="#000028"/>
<circle cx="1250" cy="491.5" r="3.2" fill="#000028"/>
<circle cx="994" cy="479.5" r="3.2" fill="#000028"/>
<circle cx="992" cy="660.5" r="3.2" fill="#000028"/>
<circle cx="762" cy="573" r="3.2" fill="#000028"/>
<text x="696" y="352.5" font-family="Liberation Sans" font-size="9" fill="#0000d8">Point1</text>
<text x="1048" y="289.8" font-family="Liberation Sans" font-size="9" fill="#0000d8">Point2</text>
<text x="1255" y="490.8" font-family="Liberation Sans" font-size="9" fill="#0000d8">Point3</text>
<text x="999" y="478.8" font-family="Liberation Sans" font-size="9" fill="#0000d8">Point4</text>
<text x="997" y="659.6" font-family="Liberation Sans" font-size="9" fill="#0000d8">Point5</text>
<text x="767" y="571.7" font-family="Liberation Sans" font-size="9" fill="#0000d8">Point6</text>
<line x1="813.4" y1="215.5" x2="998" y2="746" stroke="#000" stroke-width="4"/>
<line x1="813.4" y1="215.5" x2="998" y2="746" stroke="#fff" stroke-width="2"/>
<circle cx="813.4" cy="215.5" r="3.3" fill="#fff" stroke="#000" stroke-width="1.4"/><circle cx="813.4" cy="215.5" r="0.9" fill="#000"/>
<text transform="translate(404.8 756.5) rotate(90)" x="0" y="0" font-family="Liberation Serif" font-size="9.3" text-anchor="middle" fill="#081028" stroke="#081028" stroke-width="0.15">E 130000</text>
<text transform="translate(504.8 756.5) rotate(90)" x="0" y="0" font-family="Liberation Serif" font-size="9.3" text-anchor="middle" fill="#081028" stroke="#081028" stroke-width="0.15">E 130500</text>
<text transform="translate(604.8 756.5) rotate(90)" x="0" y="0" font-family="Liberation Serif" font-size="9.3" text-anchor="middle" fill="#081028" stroke="#081028" stroke-width="0.15">E 131000</text>
<text transform="translate(704.8 756.5) rotate(90)" x="0" y="0" font-family="Liberation Serif" font-size="9.3" text-anchor="middle" fill="#081028" stroke="#081028" stroke-width="0.15">E 131500</text>
<text transform="translate(804.8 756.5) rotate(90)" x="0" y="0" font-family="Liberation Serif" font-size="9.3" text-anchor="middle" fill="#081028" stroke="#081028" stroke-width="0.15">E 132000</text>
<text transform="translate(904.8 756.5) rotate(90)" x="0" y="0" font-family="Liberation Serif" font-size="9.3" text-anchor="middle" fill="#081028" stroke="#081028" stroke-width="0.15">E 132500</text>
<text transform="translate(1004.8 756.5) rotate(90)" x="0" y="0" font-family="Liberation Serif" font-size="9.3" text-anchor="middle" fill="#081028" stroke="#081028" stroke-width="0.15">E 133000</text>
<text transform="translate(1104.8 756.5) rotate(90)" x="0" y="0" font-family="Liberation Serif" font-size="9.3" text-anchor="middle" fill="#081028" stroke="#081028" stroke-width="0.15">E 133500</text>
<text transform="translate(1204.8 756.5) rotate(90)" x="0" y="0" font-family="Liberation Serif" font-size="9.3" text-anchor="middle" fill="#081028" stroke="#081028" stroke-width="0.15">E 134000</text>
<text transform="translate(1304.8 756.5) rotate(90)" x="0" y="0" font-family="Liberation Serif" font-size="9.3" text-anchor="middle" fill="#081028" stroke="#081028" stroke-width="0.15">E 134500</text>
<text transform="translate(1404.8 756.5) rotate(90)" x="0" y="0" font-family="Liberation Serif" font-size="9.3" text-anchor="middle" fill="#081028" stroke="#081028" stroke-width="0.15">E 135000</text>
<text transform="translate(1504.8 756.5) rotate(90)" x="0" y="0" font-family="Liberation Serif" font-size="9.3" text-anchor="middle" fill="#081028" stroke="#081028" stroke-width="0.15">E 135500</text>
<text transform="translate(1604.8 756.5) rotate(90)" x="0" y="0" font-family="Liberation Serif" font-size="9.3" text-anchor="middle" fill="#081028" stroke="#081028" stroke-width="0.15">E 136000</text>
<defs><linearGradient id="cs" x1="0" y1="0" x2="0" y2="1"><stop offset="0.000" stop-color="#f0002a"/><stop offset="0.050" stop-color="#f00a14"/><stop offset="0.100" stop-color="#f03010"/><stop offset="0.150" stop-color="#f06a10"/><stop offset="0.200" stop-color="#f0a010"/><stop offset="0.247" stop-color="#e8e000"/><stop offset="0.290" stop-color="#b8e400"/><stop offset="0.343" stop-color="#60e000"/><stop offset="0.390" stop-color="#00e020"/><stop offset="0.483" stop-color="#00e07a"/><stop offset="0.567" stop-color="#00e0c0"/><stop offset="0.637" stop-color="#00d0e0"/><stop offset="0.687" stop-color="#0090e0"/><stop offset="0.730" stop-color="#0050e0"/><stop offset="0.770" stop-color="#0010e0"/><stop offset="0.817" stop-color="#1800d8"/><stop offset="0.867" stop-color="#4000d0"/><stop offset="0.920" stop-color="#7000d0"/><stop offset="0.970" stop-color="#a000e0"/><stop offset="1.000" stop-color="#b000e4"/></linearGradient></defs>
<rect x="1577" y="325" width="40" height="300" fill="url(#cs)"/>
<text x="1597" y="333.7" font-family="Liberation Sans" font-size="9" text-anchor="middle" fill="#f0d8e0">0.0</text>
<text x="1597" y="348.9" font-family="Liberation Sans" font-size="9" text-anchor="middle" fill="#8090b0">-2.5</text>
<text x="1597" y="364.0" font-family="Liberation Sans" font-size="9" text-anchor="middle" fill="#555">-3.8</text>
<text x="1597" y="379.2" font-family="Liberation Sans" font-size="9" text-anchor="middle" fill="#333">-5.0</text>
<text x="1597" y="394.4" font-family="Liberation Sans" font-size="9" text-anchor="middle" fill="#222">-6.3</text>
<text x="1597" y="409.6" font-family="Liberation Sans" font-size="9" text-anchor="middle" fill="#222">-7.5</text>
<text x="1597" y="424.7" font-family="Liberation Sans" font-size="9" text-anchor="middle" fill="#222">-8.8</text>
<text x="1597" y="439.9" font-family="Liberation Sans" font-size="9" text-anchor="middle" fill="#222">-10.0</text>
<text x="1597" y="455.1" font-family="Liberation Sans" font-size="9" text-anchor="middle" fill="#333">-11.2</text>
<text x="1597" y="470.2" font-family="Liberation Sans" font-size="9" text-anchor="middle" fill="#333">-12.5</text>
<text x="1597" y="485.4" font-family="Liberation Sans" font-size="9" text-anchor="middle" fill="#333">-13.8</text>
<text x="1597" y="500.6" font-family="Liberation Sans" font-size="9" text-anchor="middle" fill="#333">-15.0</text>
<text x="1597" y="515.7" font-family="Liberation Sans" font-size="9" text-anchor="middle" fill="#334">-16.3</text>
<text x="1597" y="530.9" font-family="Liberation Sans" font-size="9" text-anchor="middle" fill="#667788">-17.6</text>
<text x="1597" y="546.1" font-family="Liberation Sans" font-size="9" text-anchor="middle" fill="#8090a0">-18.8</text>
<text x="1597" y="561.2" font-family="Liberation Sans" font-size="9" text-anchor="middle" fill="#f0f0f0">-20.0</text>
<text x="1597" y="576.4" font-family="Liberation Sans" font-size="9" text-anchor="middle" fill="#e0e0e0">-21.3</text>
<text x="1597" y="591.6" font-family="Liberation Sans" font-size="9" text-anchor="middle" fill="#c8c8d8">-22.5</text>
<text x="1597" y="606.8" font-family="Liberation Sans" font-size="9" text-anchor="middle" fill="#b0a8c8">-23.8</text>
<text x="1597" y="621.9" font-family="Liberation Sans" font-size="9" text-anchor="middle" fill="#c0a8d0">-25.0</text>
<text x="1583.5" y="271" font-family="Liberation Serif" font-size="9.6" fill="#101820">N 488000</text>
<text x="1583.5" y="371" font-family="Liberation Serif" font-size="9.6" fill="#101820">N 487500</text>
<text x="1583.5" y="471" font-family="Liberation Serif" font-size="9.6" fill="#101820">N 487000</text>
<text x="1583.5" y="571" font-family="Liberation Serif" font-size="9.6" fill="#101820">N 486500</text>
<text x="1583.5" y="671" font-family="Liberation Serif" font-size="9.6" fill="#101820">N 486000</text>
</svg>
<div class="a" style="left:1632px;top:146px;width:286px;height:636px;border:1px solid #8d939b;border-radius:3px 3px 0 0;background:#e2e6eb"></div>
<div class="a" style="left:1633px;top:147px;width:284px;height:22px;background:linear-gradient(#dde2e8,#d3d9df)"></div>
<div class="t" style="left:1638px;top:152px;color:#3a4450">Properties</div>
<svg style="left:1883.3px;top:152.5px" width="8" height="11"><path d="M2 1.3h3.8v5.3H2z" fill="#fafbfc" stroke="#4a4e55" stroke-width="1.5"/><path d="M0.2 6.9h7.4" stroke="#4a4e55" stroke-width="1.6"/><path d="M3.9 7v3.6" stroke="#4a4e55" stroke-width="1.1"/></svg>
<svg style="left:1901px;top:153.5px" width="10" height="8"><path d="M1 0.9l8 6.2M9 0.9l-8 6.2" stroke="#4a4e55" stroke-width="2.1"/></svg>
<div class="a" style="left:1634px;top:169px;width:282px;height:583px;background:#fff;border:1px solid #a7abb0"></div>
<div class="a" style="left:1635px;top:170px;width:17px;height:222px;background:#f1f2f4"></div>
<div class="a" style="left:1635px;top:171px;width:280px;height:19px;background:#f2f3f5;border-bottom:1px solid #e2e4e7"></div>
<div class="t" style="left:1654px;top:174px;color:#222">Layer information</div>
<svg style="left:1898px;top:177px" width="10" height="6"><path d="M1 5l4-4 4 4" fill="none" stroke="#333" stroke-width="1.3"/></svg>
<div class="a" style="left:1651px;top:189px;width:264px;height:18px;background:#fff;border-bottom:1px solid #e2e4e7;border-left:1px solid #dcdee2"></div>
<div class="a" style="left:1774px;top:189px;width:1px;height:18px;background:#e4e6e9"></div>
<div class="t" style="left:1669px;top:192px;color:#9a9ea4">Name</div>
<div class="t" style="left:1779px;top:192px;color:#9a9ea4">DESIGN</div>
<div class="a" style="left:1651px;top:206px;width:264px;height:18px;background:#fff;border-bottom:1px solid #e2e4e7;border-left:1px solid #dcdee2"></div>
<div class="a" style="left:1774px;top:206px;width:1px;height:18px;background:#e4e6e9"></div>
<div class="t" style="left:1669px;top:209px;color:#9a9ea4">Objects in this layer</div>
<div class="t" style="left:1779px;top:209px;color:#9a9ea4">7</div>
<div class="a" style="left:1635px;top:224px;width:280px;height:19px;background:#f2f3f5;border-bottom:1px solid #e2e4e7"></div>
<div class="t" style="left:1654px;top:227px;color:#222">Lineplanning layer settings</div>
<svg style="left:1898px;top:230px" width="10" height="6"><path d="M1 5l4-4 4 4" fill="none" stroke="#333" stroke-width="1.3"/></svg>
<div class="a" style="left:1651px;top:243px;width:264px;height:19px;background:#fff;border-bottom:1px solid #e2e4e7;border-left:1px solid #dcdee2"></div>
<div class="a" style="left:1774px;top:243px;width:1px;height:19px;background:#e4e6e9"></div>
<div class="t" style="left:1669px;top:246px;color:#222">Fill color</div>
<div class="a" style="left:1781px;top:247px;width:22px;height:10px;background:#8080ff;border:1px solid #333"></div>
<div class="t" style="left:1808px;top:246px;color:#111;font-weight:bold;letter-spacing:0.3px">128, 0, 0, 255</div>
<div class="a" style="left:1651px;top:262px;width:264px;height:19px;background:#fff;border-bottom:1px solid #e2e4e7;border-left:1px solid #dcdee2"></div>
<div class="a" style="left:1774px;top:262px;width:1px;height:19px;background:#e4e6e9"></div>
<div class="t" style="left:1669px;top:265px;color:#222">Hide labels</div>
<svg style="left:1778px;top:265px" width="13" height="13"><rect x="0.5" y="0.5" width="12" height="12" fill="#f4f4f4" stroke="#b0b0b0"/><rect x="2" y="2" width="9" height="9" fill="#e8e8e8"/></svg>
<div class="a" style="left:1651px;top:280px;width:264px;height:19px;background:#fff;border-bottom:1px solid #e2e4e7;border-left:1px solid #dcdee2"></div>
<div class="a" style="left:1774px;top:280px;width:1px;height:19px;background:#e4e6e9"></div>
<div class="t" style="left:1669px;top:283px;color:#222">Line color</div>
<div class="a" style="left:1781px;top:284px;width:22px;height:10px;background:#0000ff;border:1px solid #333"></div>
<div class="t" style="left:1808px;top:283px;color:#111;font-weight:bold;letter-spacing:0.3px">0, 0, 255</div>
<div class="a" style="left:1651px;top:299px;width:264px;height:19px;background:#fff;border-bottom:1px solid #e2e4e7;border-left:1px solid #dcdee2"></div>
<div class="a" style="left:1774px;top:299px;width:1px;height:19px;background:#e4e6e9"></div>
<div class="t" style="left:1669px;top:302px;color:#222">Line style</div>
<div class="a" style="left:1777px;top:307px;width:25px;height:2px;background:#111"></div>
<div class="t" style="left:1808px;top:302px;color:#111;font-weight:bold;letter-spacing:0.3px">Solid</div>
<div class="a" style="left:1651px;top:318px;width:264px;height:19px;background:#fff;border-bottom:1px solid #e2e4e7;border-left:1px solid #dcdee2"></div>
<div class="a" style="left:1774px;top:318px;width:1px;height:19px;background:#e4e6e9"></div>
<div class="t" style="left:1669px;top:321px;color:#222">Line width</div>
<div class="a" style="left:1777px;top:327px;width:25px;height:1px;background:#111"></div>
<div class="t" style="left:1808px;top:321px;color:#111;font-weight:bold;letter-spacing:0.3px">1 mm</div>
<div class="a" style="left:1635px;top:337px;width:280px;height:19px;background:#f2f3f5;border-bottom:1px solid #e2e4e7"></div>
<div class="t" style="left:1654px;top:340px;color:#222">Visibility settings</div>
<svg style="left:1898px;top:343px" width="10" height="6"><path d="M1 5l4-4 4 4" fill="none" stroke="#333" stroke-width="1.3"/></svg>
<div class="a" style="left:1651px;top:355px;width:264px;height:19px;background:#fff;border-bottom:1px solid #e2e4e7;border-left:1px solid #dcdee2"></div>
<div class="a" style="left:1774px;top:355px;width:1px;height:19px;background:#e4e6e9"></div>
<div class="t" style="left:1669px;top:358px;color:#222">Show in plan view</div>
<svg style="left:1778px;top:358px" width="13" height="13"><rect x="0.5" y="0.5" width="12" height="12" fill="#fff" stroke="#a3a3a3"/><rect x="2" y="2" width="9" height="9" fill="#e6e6e6"/><path d="M3 6.5l2.5 3L10 2.5" fill="none" stroke="#333" stroke-width="1.8"/></svg>
<div class="a" style="left:1651px;top:374px;width:264px;height:19px;background:#fff;border-bottom:1px solid #e2e4e7;border-left:1px solid #dcdee2"></div>
<div class="a" style="left:1774px;top:374px;width:1px;height:19px;background:#e4e6e9"></div>
<div class="t" style="left:1669px;top:377px;color:#222">Show in profile view</div>
<svg style="left:1778px;top:377px" width="13" height="13"><rect x="0.5" y="0.5" width="12" height="12" fill="#fff" stroke="#a3a3a3"/><rect x="2" y="2" width="9" height="9" fill="#e6e6e6"/><path d="M3 6.5l2.5 3L10 2.5" fill="none" stroke="#333" stroke-width="1.8"/></svg>
<div class="a" style="left:1653px;top:374px;width:121px;height:18px;background:#dce6f2"></div>
<div class="t" style="left:1669px;top:377px;color:#111">Show in profile view</div>
<svg style="left:1778px;top:377px" width="13" height="13"><rect x="0.5" y="0.5" width="12" height="12" fill="#fff" stroke="#a3a3a3"/><rect x="2" y="2" width="9" height="9" fill="#e6e6e6"/><path d="M3 6.5l2.5 3L10 2.5" fill="none" stroke="#333" stroke-width="1.8"/></svg>
<div class="a" style="left:1775px;top:374px;width:139px;height:18px;border:1px dotted #333"></div>
<div class="a" style="left:1652px;top:373px;width:162px;height:21px;border:2px solid #d21e2a;border-radius:7px/9px"></div>
<div class="a" style="left:1634px;top:751px;width:282px;height:30px;background:linear-gradient(#d8dce2,#cdd2d8)"></div>
<div class="a" style="left:1769px;top:751px;width:92px;height:26px;background:linear-gradient(#eef0f3,#e6e9ed);border:1px solid #b6bbc1;border-top:none"></div>
<svg style="left:1650px;top:756px" width="13" height="16"><circle cx="7" cy="6" r="5.5" fill="#111"/><text x="4.3" y="9.5" font-size="9" font-weight="bold" font-family="Liberation Sans" fill="#fff">?</text><path d="M1 10l1 5 1-2 2 2" fill="none" stroke="#999" stroke-width="0.7"/></svg>
<div class="t" style="left:1667px;top:759px;color:#333">Cursor information</div>
<svg style="left:1781px;top:758px" width="12" height="14"><rect x="0" y="0" width="12" height="14" fill="#b8b8e8"/><path d="M2 3h8M2 6h4M2 9h8M2 12h4" stroke="#fff" stroke-width="1.2"/></svg>
<div class="t" style="left:1798px;top:759px;color:#333">Properties</div>
<div class="a" style="left:2px;top:786px;width:1916px;height:227px;border:1px solid #8d939b;border-radius:3px 3px 0 0;background:#e9ecf0"></div>
<div class="t" style="left:8px;top:792px;color:#5a6470">Profile view</div>
<svg style="left:1883.6px;top:792.5px" width="8" height="11"><path d="M2 1.3h3.8v5.3H2z" fill="#fafbfc" stroke="#4a4e55" stroke-width="1.5"/><path d="M0.2 6.9h7.4" stroke="#4a4e55" stroke-width="1.6"/><path d="M3.9 7v3.6" stroke="#4a4e55" stroke-width="1.1"/></svg>
<svg style="left:1901px;top:793.5px" width="10" height="8"><path d="M1 0.9l8 6.2M9 0.9l-8 6.2" stroke="#4a4e55" stroke-width="2.1"/></svg>
<svg style="left:4px;top:809px" width="1912" height="174" viewBox="4 809 1912 174">
<rect x="4" y="809" width="1912" height="174" fill="#1e1e1e"/>
<path d="M4 822.5H1419M4 846.5H1419M4 870.5H1419M4 894.5H1419M4 918.5H1419M4 942.5H1419M4 966.5H1419" stroke="#565656" stroke-width="1" fill="none"/>
<path d="M1419 822.5H1916M1419 846.5H1916M1419 870.5H1916M1419 894.5H1916M1419 918.5H1916M1419 942.5H1916M1419 966.5H1916" stroke="#9a9a9a" stroke-width="1" stroke-dasharray="1.5 1" fill="none"/>
<path d="M112.5 809V983M314.5 809V983M517.5 809V983M719.5 809V983M921.5 809V983M1123.5 809V983M1325.5 809V983M1527.5 809V983M1729.5 809V983" stroke="#5e5e5e" stroke-width="1" fill="none"/>
<text x="4" y="826" font-family="Liberation Sans" font-size="11" fill="#e8e8e8">2,8</text>
<text x="4" y="850" font-family="Liberation Sans" font-size="11" fill="#e8e8e8">2,7</text>
<text x="4" y="874" font-family="Liberation Sans" font-size="11" fill="#e8e8e8">2,6</text>
<text x="4" y="898" font-family="Liberation Sans" font-size="11" fill="#e8e8e8">2,5</text>
<text x="4" y="922" font-family="Liberation Sans" font-size="11" fill="#e8e8e8">2,4</text>
<text x="4" y="946" font-family="Liberation Sans" font-size="11" fill="#e8e8e8">2,3</text>
<text x="4" y="970" font-family="Liberation Sans" font-size="11" fill="#e8e8e8">2,2</text>
<text x="113.0" y="980" font-family="Liberation Sans" font-size="11" letter-spacing="0.5" text-anchor="middle" fill="#dcdcdc">600 MP</text>
<text x="315.0" y="980" font-family="Liberation Sans" font-size="11" letter-spacing="0.5" text-anchor="middle" fill="#dcdcdc">800 MP</text>
<text x="517.1" y="980" font-family="Liberation Sans" font-size="11" letter-spacing="0.5" text-anchor="middle" fill="#dcdcdc">1000 MP</text>
<text x="719.1" y="980" font-family="Liberation Sans" font-size="11" letter-spacing="0.5" text-anchor="middle" fill="#dcdcdc">1200 MP</text>
<text x="921.2" y="980" font-family="Liberation Sans" font-size="11" letter-spacing="0.5" text-anchor="middle" fill="#dcdcdc">1400 MP</text>
<text x="1123.2" y="980" font-family="Liberation Sans" font-size="11" letter-spacing="0.5" text-anchor="middle" fill="#dcdcdc">1600 MP</text>
<text x="1325.3" y="980" font-family="Liberation Sans" font-size="11" letter-spacing="0.5" text-anchor="middle" fill="#dcdcdc">1800 MP</text>
<text x="1527.3" y="980" font-family="Liberation Sans" font-size="11" letter-spacing="0.5" text-anchor="middle" fill="#dcdcdc">2000 MP</text>
<text x="1729.4" y="980" font-family="Liberation Sans" font-size="11" letter-spacing="0.5" text-anchor="middle" fill="#dcdcdc">2200 MP</text>
<polyline points="92,906 314,917 516,928 690,936 718,940 920,960 1060,973 1084,976 1100,972 1123,966.5 1326,924 1528,880 1728,840 1828,818" fill="none" stroke="#0000f4" stroke-width="3.3" stroke-linejoin="round"/>
<line x1="1693" y1="823" x2="1700" y2="823" stroke="#0000f0" stroke-width="3" stroke-linecap="round"/>
<text x="1708" y="828.5" font-family="Liberation Sans" font-size="8.6" letter-spacing="-0.15" fill="#f0f0f0">Design from points/DESIGN</text>
</svg>
<div class="a" style="left:3px;top:983px;width:1914px;height:28px;background:linear-gradient(#dde1e6,#d2d6dc)"></div>
<div class="a" style="left:7px;top:983px;width:98px;height:25px;background:linear-gradient(#eceef2,#e6e9ed);border:1px solid #b4b9bf;border-top:none"></div>
<svg style="left:19px;top:990px" width="13" height="12"><path d="M0.5 0v11.5h12V3l-3 4-3-4-3 4-2-3z" fill="#1a90d8"/><path d="M0.5 7l2-3 3 4 3-4 3 3" fill="none" stroke="#7cc" stroke-width="0.8"/></svg>
<div class="t" style="left:37px;top:990px;color:#333">Profile view</div>
<svg style="left:117px;top:990px" width="12" height="12"><g fill="#a8a8a8"><rect x="4.5" y="0" width="3" height="12"/><rect x="4.5" y="0" width="3" height="12" transform="rotate(45 6 6)"/><rect x="4.5" y="0" width="3" height="12" transform="rotate(90 6 6)"/><rect x="4.5" y="0" width="3" height="12" transform="rotate(135 6 6)"/><circle cx="6" cy="6" r="4.5"/></g><circle cx="6" cy="6" r="2.5" fill="#d8dce2"/></svg>
<div class="t" style="left:135px;top:990px;color:#333">Tasks</div>
<svg style="left:187px;top:989px" width="12" height="14"><rect x="0.5" y="0.5" width="11" height="13" rx="1" fill="#e0e0e0" stroke="#b0b0b0"/><path d="M2.5 3h7M2.5 5.5h5M2.5 8h7M2.5 10.5h4" stroke="#555" stroke-width="1"/></svg>
<div class="t" style="left:204px;top:990px;color:#333">Output</div>
<div class="a" style="left:0;top:1014px;width:1920px;height:26px;background:linear-gradient(#e8eaed,#dfe2e6 40%,#cfd3d8);border-top:1px solid #b5b9be"></div>
<div class="a" style="left:1551px;top:1016px;width:1px;height:24px;background:#b0b4ba"></div>
<div class="t" style="right:8px;top:1022px;color:#333">Level 0 - Cell size 0,00 x 0,00; 134298,296 E; 486135,085 N; Mean : NaN</div>
<div class="a" style="left:1540px;top:927px;width:364px;height:15px;background:#1e1e1e"></div>
<div class="a" style="left:1540px;top:942px;width:364px;height:86px;background:linear-gradient(172deg,#1d1d1d 0%,#202020 30%,#2c2c2d 60%,#363638 85%,#3c3c3e 100%)"></div>
<svg style="left:1561px;top:957px" width="38" height="38"><circle cx="19" cy="19" r="18.3" fill="#0b78d8"/><rect x="18" y="16" width="2" height="15" fill="#fff"/><rect x="18" y="10" width="2" height="3" fill="#fff"/></svg>
<div class="t" style="left:1619px;top:951px;font-size:14.5px;line-height:16px;font-weight:bold;color:#f4f4f4;letter-spacing:-0.2px">Greenshot</div>
<div class="t" style="left:1619px;top:971px;font-size:14.5px;line-height:16px;color:#c4c4c4">Exported to: MS Paint</div>
<div class="t" style="left:1619px;top:993px;font-size:12.3px;line-height:14px;color:#b0b0b0">Greenshot</div>
</body></html>
